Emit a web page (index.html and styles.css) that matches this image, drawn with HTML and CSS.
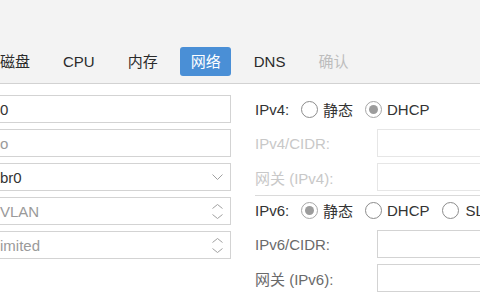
FILE: index.html
```html
<!DOCTYPE html>
<html lang="zh-CN">
<head>
<meta charset="utf-8">
<title>网络</title>
<link rel="stylesheet" href="styles.css">
</head>
<body>
<div class="tabbar">
  <div class="tabs">
    <span class="tab">磁盘</span>
    <span class="tab">CPU</span>
    <span class="tab">内存</span>
    <span class="tab active">网络</span>
    <span class="tab">DNS</span>
    <span class="tab disabled">确认</span>
  </div>
</div>
<div class="panel">
  <div class="col-left">
    <div class="field">0</div>
    <div class="field placeholder">o</div>
    <div class="field">br0
      <svg class="icon" width="11" height="6" viewBox="0 0 11 6"><path d="M0.5 0.5 L5.5 5.5 L10.5 0.5" stroke="#a0a0a0" fill="none"/></svg>
    </div>
    <div class="field placeholder">VLAN
      <svg class="icon" width="11" height="15" viewBox="0 0 11 15"><path d="M0.5 4.5 L5.5 0.5 L10.5 4.5 M0.5 10.5 L5.5 14.5 L10.5 10.5" stroke="#a0a0a0" fill="none"/></svg>
    </div>
    <div class="field placeholder">imited
      <svg class="icon" width="11" height="15" viewBox="0 0 11 15"><path d="M0.5 4.5 L5.5 0.5 L10.5 4.5 M0.5 10.5 L5.5 14.5 L10.5 10.5" stroke="#a0a0a0" fill="none"/></svg>
    </div>
  </div>
  <div class="col-right">
    <div class="group">
      <div class="row">
        <span class="radio-label">IPv4:</span>
        <span class="opt"><span class="radio"></span>静态</span>
        <span class="opt"><span class="radio on"></span>DHCP</span>
      </div>
      <div class="row disabled">
        <span class="label">IPv4/CIDR:</span>
        <div class="field"></div>
      </div>
      <div class="row disabled">
        <span class="label">网关 (IPv4):</span>
        <div class="field"></div>
      </div>
    </div>
    <div class="group v6">
      <div class="row">
        <span class="radio-label">IPv6:</span>
        <span class="opt"><span class="radio on"></span>静态</span>
        <span class="opt"><span class="radio"></span>DHCP</span>
        <span class="opt last"><span class="radio"></span>SLAAC</span>
      </div>
      <div class="row soft">
        <span class="label">IPv6/CIDR:</span>
        <div class="field"></div>
      </div>
      <div class="row soft">
        <span class="label">网关 (IPv6):</span>
        <div class="field"></div>
      </div>
    </div>
  </div>
</div>
</body>
</html>
```

FILE: styles.css
```css
html, body {
  margin: 0;
  padding: 0;
}

body {
  width: 480px;
  height: 300px;
  overflow: hidden;
  background: #fff;
  color: #333;
  font-family: "Liberation Sans", "Noto Sans CJK SC", sans-serif;
  font-size: 15px;
}

.tabbar {
  height: 83px;
  background: #f3f3f3;
  border-bottom: 1px solid #d2d2d2;
  display: flex;
  align-items: flex-end;
}

.tabs {
  display: flex;
  gap: 12px;
  margin-left: -10.5px;
  margin-bottom: 7px;
}

.tab {
  height: 29px;
  line-height: 29px;
  padding: 0 10.5px;
  border-radius: 3px;
  color: #2a2a2a;
  white-space: nowrap;
}

.tab.active {
  background: #4a8fd6;
  color: #fff;
}

.tab.disabled {
  color: #bdbdbd;
}

.panel {
  display: flex;
  gap: 24px;
  margin-left: -7px;
  padding-top: 11px;
}

.col-left {
  flex: none;
  width: 238px;
  display: flex;
  flex-direction: column;
  gap: 6px;
}

.field {
  box-sizing: border-box;
  height: 28px;
  border: 1px solid #d3d3d3;
  padding: 0 7px 0 6px;
  display: flex;
  align-items: center;
  white-space: nowrap;
  background: #fff;
}

.placeholder {
  color: #9a9a9a;
}

.icon {
  margin-left: auto;
  flex: none;
}

.col-right {
  flex: none;
  width: 225px;
  overflow: hidden;
}

.group {
  display: flex;
  flex-direction: column;
  gap: 6px;
}

.group.v6 {
  margin-top: 4px;
  border-top: 1px solid #dadada;
}

.row {
  height: 28px;
  display: flex;
  align-items: center;
  white-space: nowrap;
}

.row .field {
  flex: 1;
  margin-right: -10px;
}

.label {
  flex: none;
  width: 122px;
}

.radio-label {
  flex: none;
  width: 46px;
}

.opt {
  display: flex;
  align-items: center;
  margin-right: 12px;
  flex: none;
}

.opt.last {
  margin-right: 0;
}

.radio {
  box-sizing: border-box;
  width: 17px;
  height: 17px;
  margin-right: 5px;
  border: 1px solid #8c8c8c;
  border-radius: 50%;
  background: #fff;
  display: flex;
  align-items: center;
  justify-content: center;
  flex: none;
}

.opt.last .radio {
  margin-right: 7px;
}

.radio.on {
  border-color: #a6a6a6;
}

.radio.on::after {
  content: "";
  width: 9px;
  height: 9px;
  border-radius: 50%;
  background: #9c9c9c;
}

.row.disabled .label {
  color: #c8c8c8;
}

.row.disabled .field {
  border-color: #e6e6e6;
}

.row.soft .label {
  color: #6a6a6a;
}
```
